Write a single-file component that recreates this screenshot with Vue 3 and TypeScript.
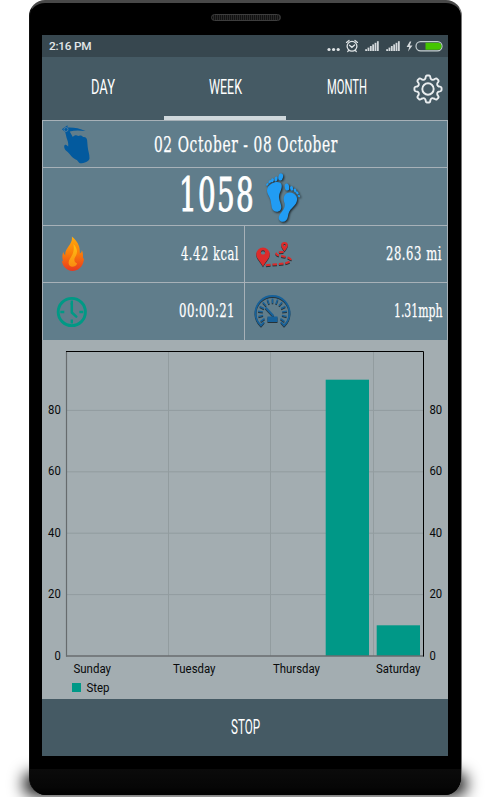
<script setup lang="ts">
import { h } from 'vue'

interface FitProps {
  text: string
  width: number
  height: number
  size: number
  spacing?: number
}

/* Text squeezed to a fixed width; its baseline sits at `height`, with room below for descenders. */
const FitText = (p: FitProps) =>
  h('svg', { class: 'fit', width: p.width + 4, height: p.height + 8 }, [
    h(
      'text',
      {
        x: 0,
        y: p.height,
        'font-size': p.size,
        'letter-spacing': p.spacing ?? 0,
        textLength: p.width,
        lengthAdjust: 'spacingAndGlyphs',
      },
      p.text,
    ),
  ])
FitText.props = ['text', 'width', 'height', 'size', 'spacing']

const tabs = [
  { label: 'DAY', width: 24, active: false },
  { label: 'WEEK', width: 33, active: true },
  { label: 'MONTH', width: 40, active: false },
]

const yOf = (v: number) => 316 - v * 3.07
const ticks = [0, 20, 40, 60, 80]
const columns = [126.5, 228.5, 331.5]
const days = [
  { label: 'Sunday', x: 31.5, width: 37.5 },
  { label: 'Tuesday', x: 131, width: 42.5 },
  { label: 'Thursday', x: 231, width: 47 },
  { label: 'Saturday', x: 334, width: 44.5 },
]
const bars = [
  { x: 283.7, value: 90 },
  { x: 334.7, value: 10 },
]
const signal = [0, 1, 2, 3, 4, 5]
const dial = Array.from({ length: 13 }, (_, i) => -125 + (i * 250) / 12)
const teeth = [0, 45, 90, 135, 180, 225, 270, 315]
const gear = teeth
  .map((a, i) => {
    const pt = (r: number, d: number) => {
      const t = ((a + d) * Math.PI) / 180
      return `${(15 + r * Math.sin(t)).toFixed(2)} ${(15 - r * Math.cos(t)).toFixed(2)}`
    }
    return `${i ? 'L' : 'M'}${pt(10.4, -17)} Q${pt(11, -12)} ${pt(12.2, -11)} Q${pt(13.6, -9)} ${pt(13.6, -5)} L${pt(13.6, 5)} Q${pt(13.6, 9)} ${pt(12.2, 11)} Q${pt(11, 12)} ${pt(10.4, 17)} Q${pt(9.8, 22.5)} ${pt(10.4, 28)}`
  })
  .join(' ') + 'Z'
</script>

<template>
  <main class="page">
    <div class="ground"><div class="shade"></div></div>
    <section class="phone">
      <div class="top">
        <div class="speaker"></div>
      </div>
      <div class="screen">
        <header class="status">
          <span class="time">2:16 PM</span>
          <svg width="118" height="22">
            <g fill="#e0e4e6">
              <circle cx="4" cy="14.5" r="1.6" /><circle cx="8.6" cy="14.5" r="1.6" /><circle cx="13.2" cy="14.5" r="1.6" />
            </g>
            <g fill="none" stroke="#dfe4e6" stroke-width="1.3" stroke-linecap="round">
              <circle cx="27" cy="11.3" r="4.9" />
              <path d="M24.5 10.2l2.4 2.1 2.7-2.4M21.5 7.4l2.5-2M32.5 7.4l-2.5-2M23.5 15.6l-.8 1M30.5 15.6l.8 1" />
            </g>
            <g fill="#d5dadd">
              <rect v-for="i in signal" :key="'a' + i" :x="40.2 + i * 2.35" :y="14.2 - i * 1.6" width="1.8" :height="1.8 + i * 1.6" />
              <rect v-for="i in signal" :key="'b' + i" :x="61.2 + i * 2.35" :y="14.2 - i * 1.6" width="1.8" :height="1.8 + i * 1.6" />
              <path d="M84.8 6.4L81.6 12h2.6l-1.2 4.6 4.5-6h-2.8l1.6-4.2z" />
            </g>
            <rect x="91" y="6.6" width="26" height="9.2" rx="4.6" fill="#37474f" stroke="#c6cfd2" stroke-width="1.2" />
            <path d="M100.5 7.8h12.5a3.5 3.5 0 0 1 0 7h-12.5z" fill="#45c500" />
          </svg>
        </header>

        <nav class="tabs">
          <div v-for="t in tabs" :key="t.label" class="tab" :class="{ active: t.active }">
            <FitText :text="t.label" :width="t.width" :height="15" :size="20" />
          </div>
          <div class="settings">
            <svg width="30" height="30" fill="none" stroke="#e9edef" stroke-width="1.9" stroke-linejoin="round">
              <path :d="gear" />
              <circle cx="15" cy="15" r="5.7" />
            </svg>
          </div>
        </nav>

        <section class="stats">
          <div class="row date">
            <svg class="hand" width="30" height="40" viewBox="0 0 30 40" fill="#035a9e">
              <path d="M.8 4.300L6.500.2v2.200c7-.2 12 .8 18 3.700-6-.8-11-.8-15.800.3L11.800 12c1.300-2 4-2.300 5.300-.9 1.900-1.300 4.200-.6 5 1 2.100-.4 3.600.7 4 2.900l.6 7c.3 4 1.900 6.500 1.800 11.500-.5 3-5 4.800-9.500 4.800-1.200-.3-1.700-2.300-3.200-3.300-4.500-1.500-7-6.500-10.300-9-2.300-1.700-3-5.300-1.500-6.200 1.700-.5 2 1 3.200 1.600C7.700 18 6.500 15.500 5.500 12.500L4.200 7z" />
              <circle cx="5" cy="4.500" r="2" fill="none" stroke="#6787a0" stroke-width=".7" />
            </svg>
            <FitText text="02 October - 08 October" :width="184" :height="17" :size="21.8" :spacing="0.9" />
          </div>

          <div class="row steps">
            <FitText text="1058" :width="76" :height="34" :size="46" :spacing="2" />
            <svg class="feet" width="38" height="52" fill="#219cf3">
              <g>
                <path d="M3.500 16c3-6 12-8 14-3.500 1.400 4-3 8.500-2.500 13.500.4 4.200 4.100 9 1.300 12.300-2.700 2.800-7.300 1.400-8.400-2.300C6.900 31.500 7.200 28 5 24.300 3.500 21.800 2.300 19 3.500 16z" />
                <ellipse cx="16.7" cy="5" rx="2.3" ry="3.6" transform="rotate(12 17 5)" />
                <ellipse cx="12" cy="7" rx="1.5" ry="2.5" transform="rotate(15 12 7)" />
                <ellipse cx="8.5" cy="8.2" rx="1.4" ry="2.1" transform="rotate(25 8 8)" />
                <ellipse cx="5.7" cy="9.8" rx="1.2" ry="1.8" transform="rotate(35 6 10)" />
                <ellipse cx="3.5" cy="12" rx="1" ry="1.5" transform="rotate(45 3 12)" />
                <path d="M20.500 23.500c2.400-4.600 9.500-3.700 12 1 1.800 4-.5 7.700-3.500 10.600-4 4-4.300 5.500-5.200 10-.8 4-4.500 6.100-7.500 3.800-3.400-2.600-.6-6.500 1.900-9.700 2.400-3.100 3.200-5.300 2-9-.8-2.500-.8-4.400.3-6.700z" />
                <ellipse cx="22.8" cy="15" rx="2.2" ry="3.6" transform="rotate(-10 23 14)" />
                <ellipse cx="27.5" cy="16.6" rx="1.5" ry="2.4" transform="rotate(-15 27 16)" />
                <ellipse cx="30.8" cy="18.5" rx="1.3" ry="2" transform="rotate(-25 31 18)" />
                <ellipse cx="33.3" cy="21" rx="1.2" ry="1.7" transform="rotate(-35 33 21)" />
                <ellipse cx="35" cy="24" rx="1" ry="1.3" transform="rotate(-35 35 24)" />
              </g>
            </svg>
          </div>

          <div class="pair">
            <div class="cell">
              <svg class="icon" width="36" height="40">
                <defs>
                  <linearGradient id="fire" x1="0" y1="0" x2="0" y2="1">
                    <stop offset="0" stop-color="#ffad0c" /><stop offset=".5" stop-color="#fa7b09" /><stop offset="1" stop-color="#e9391f" />
                  </linearGradient>
                  <linearGradient id="flame" x1="0" y1="0" x2="0" y2="1">
                    <stop offset="0" stop-color="#ffc313" /><stop offset="1" stop-color="#f98b10" />
                  </linearGradient>
                </defs>
                <path d="M15.800 2.500c5.500 4.500 8.500 9.500 8 17 1.700-.7 2-2.200 2-3.500 1.600 3.300 1.100 6.500 1.200 9l1-1.300c0 6.500-3.800 12.800-11.200 13.300C9.800 36.700 6.300 31.500 5.800 26.500l1.600 1.300C5.800 23.500 6.300 20.600 7.300 17.800c.3 1.800.9 2.700 2 3.400C8.300 14.200 17.300 10 15.800 2.500z" fill="url(#fire)" />
                <path d="M17.500 10c4.500 5 4.300 9 1.700 13-1.500 2.500-1 5.300 1.900 6.400-1.400 4.500-9.400 4.600-8.400-1.500.8-4.500 6.500-7.500 4.800-17.900z" fill="url(#flame)" />
              </svg>
              <FitText text="4.42 kcal" :width="58" :height="15" :size="19" :spacing="0.8" />
            </div>
            <div class="cell right">
              <svg class="icon shadow" width="42" height="40" fill="#dc2b2b">
                <path fill-rule="evenodd" d="M11 32.500C8 27 4.300 24.500 4.300 20.300a6.700 6.700 0 0 1 13.400 0c0 4.200-3.700 6.700-6.700 12.200zM11 16.200a2.200 2.200 0 1 0 0 4.400 2.200 2.200 0 0 0 0-4.400z" />
                <path fill-rule="evenodd" d="M32.500 17.500c-1.600-2.600-3.300-4.300-3.300-6.300a3.300 3.300 0 0 1 6.600 0c0 2-1.700 3.700-3.300 6.300zM32.500 10a1.100 1.100 0 1 0 0 2.200 1.100 1.100 0 0 0 0-2.200z" />
                <path d="M31.500 18c-8-.2-9.500 2.500-3.500 3.700 7.500 1.200 13.500 3.200 9.500 6-4.500 2.800-15 2-24.500 3.800" fill="none" stroke="#dc2b2b" stroke-width="2" stroke-dasharray="4.500 2" />
              </svg>
              <FitText text="28.63 mi" :width="56" :height="15" :size="19" :spacing="0.8" />
            </div>
          </div>

          <div class="pair last">
            <div class="cell clock">
              <svg class="icon" width="32" height="40" fill="none" stroke="#009985">
                <circle cx="15.8" cy="21" r="13.6" stroke-width="2.9" />
                <path d="M15.800 9.500v4M15.800 28.500v4M4.300 21h4M23.300 21h4" stroke-width="2.4" />
                <path d="M15.800 12.500v9l4.500 4.200" stroke-width="2.5" stroke-linecap="round" stroke-linejoin="round" />
              </svg>
              <FitText text="00:00:21" :width="56" :height="15" :size="19" :spacing="0.6" />
            </div>
            <div class="cell right">
              <svg class="icon shadow" width="42" height="40" fill="none" stroke="#176199">
                <path d="M12 31L9 34.500A17 17 0 1 1 32 34.500l-3-3.500" stroke-width="1.9" />
                <path
                  v-for="a in dial"
                  :key="a"
                  :transform="`rotate(${a} 20.5 22)`"
                  d="M20.500 7.500v4.800"
                  stroke-width="1.5"
                />
                <path d="M13.500 16.500l8 8.500" stroke-width="2" />
                <rect x="15.5" y="25.500" width="10" height="5.500" fill="#176199" stroke="none" />
              </svg>
              <FitText text="1.31mph" :width="48.5" :height="15" :size="19" />
            </div>
          </div>
        </section>

        <section class="chart">
          <svg width="406" height="359">
            <g stroke="#929c9f" stroke-width="1">
              <line v-for="t in ticks.slice(1)" :key="t" x1="25" x2="381" :y1="yOf(t)" :y2="yOf(t)" />
              <line v-for="c in columns" :key="c" y1="12" y2="316" :x1="c" :x2="c" />
            </g>
            <rect v-for="b in bars" :key="b.x" :x="b.x" :y="yOf(b.value)" width="43.3" :height="b.value * 3.07" fill="#009887" />
            <path d="M24.500 11v305.500" stroke="#666b6d" stroke-width="1.2" />
            <path d="M24 316h358" stroke="#686d6f" stroke-width="1.3" />
            <path d="M24 11.500h357.500v305" fill="none" stroke="#000" />
            <g class="label">
              <text v-for="t in ticks" :key="'l' + t" x="18.8" :y="yOf(t) + 3.5" text-anchor="end" :textLength="t ? 12.7 : 6.3" lengthAdjust="spacingAndGlyphs">{{ t }}</text>
              <text v-for="t in ticks" :key="'r' + t" x="387.5" :y="yOf(t) + 3.5" :textLength="t ? 12.7 : 6.3" lengthAdjust="spacingAndGlyphs">{{ t }}</text>
              <text v-for="d in days" :key="d.label" :x="d.x" y="333" :textLength="d.width" lengthAdjust="spacingAndGlyphs">{{ d.label }}</text>
              <text x="44.5" y="352.3" textLength="23" lengthAdjust="spacingAndGlyphs">Step</text>
            </g>
            <rect x="30" y="343" width="9" height="9" fill="#009887" />
          </svg>
        </section>

        <button class="stop">
          <FitText text="STOP" :width="29" :height="15" :size="20" />
        </button>
      </div>
      <div class="chin"></div>
    </section>
  </main>
</template>

<style>
body {
  margin: 0;
  background: #fff;
}
</style>

<style scoped>
.page {
  position: relative;
  box-sizing: border-box;
  width: 490px;
  height: 800px;
  padding-left: 29px;
  overflow: hidden;
  background: #fff;
  font-family: Roboto, sans-serif;
}
.fit {
  display: block;
  flex: none;
  margin-right: -4px;
  overflow: visible;
  fill: #fff;
}
.ground {
  position: absolute;
  left: 0;
  top: 745px;
  width: 490px;
  height: 52px;
  overflow: hidden;
}
.shade {
  margin: 28px 24px 0;
  height: 22px;
  border-radius: 8px;
  background: #000;
  filter: blur(8px);
}
.phone {
  position: relative;
  box-sizing: border-box;
  display: flex;
  flex-direction: column;
  width: 433px;
  height: 795px;
  border: 1px solid #111;
  border-right-color: #777;
  border-top: 3px solid #484848;
  border-bottom: 0;
  border-radius: 16px 16px 17px 17px;
  padding: 0 12px;
  background: #000;
  overflow: hidden;
}
.top {
  display: flex;
  justify-content: center;
  height: 32px;
  padding-top: 11px;
  box-sizing: border-box;
  flex: none;
}
.speaker {
  box-sizing: border-box;
  width: 70px;
  height: 7px;
  border: 1px solid #3d3d3d;
  border-radius: 4px;
  background: repeating-linear-gradient(90deg, #111 0 1px, #292929 1px 2px);
}
.screen {
  display: flex;
  flex-direction: column;
  width: 406px;
  height: 721px;
  flex: none;
}
.chin {
  flex: 1;
  margin: 13px -12px 0;
  background: linear-gradient(#0b0b0b, #060606 70%, #000);
}
.status {
  display: flex;
  justify-content: space-between;
  align-items: center;
  box-sizing: border-box;
  height: 22px;
  padding: 0 5px 0 7px;
  background: #37474f;
}
.time {
  color: #e3e7e9;
  font-size: 11.8px;
  font-weight: 500;
  letter-spacing: -0.25px;
}
.tabs {
  display: flex;
  height: 63px;
  background: #455a64;
}
.tab {
  box-sizing: border-box;
  display: flex;
  justify-content: center;
  width: 122px;
  padding-top: 22px;
  border-bottom: 4px solid transparent;
}
.tab.active {
  border-color: #cfd8dc;
}
.settings {
  padding: 17px 0 0 5px;
}
.stats {
  box-sizing: border-box;
  display: grid;
  grid-template-rows: 46px 57px 56px 57px;
  row-gap: 1px;
  height: 220px;
  padding: 1px 1px 0;
  background: #a7b1b8;
  font-family: 'DejaVu Serif Condensed', 'DejaVu Serif', serif;
  font-stretch: condensed;
}
.stats .fit {
  stroke: #fff;
  stroke-width: 0.25px;
}
.row,
.cell {
  display: flex;
  background: #607d8b;
}
.date {
  padding: 0 0 0 18px;
}
.hand {
  margin: 4px 63px 0 0;
}
.date .fit {
  margin-top: 14px;
}
.steps {
  padding-left: 136px;
}
.steps .fit {
  margin-top: 9px;
  stroke-width: 1px;
}
.feet {
  margin: 4px 0 0 9px;
  filter: drop-shadow(1px 1.5px 0.8px rgba(0, 0, 0, 0.75));
}
.pair {
  display: grid;
  grid-template-columns: 201px 202px;
  column-gap: 1px;
}
.cell {
  justify-content: space-between;
  padding: 8px 10px 0 13px;
}
.pair .fit {
  margin-top: 11px;
  margin-right: -9px;
}
.cell.right {
  padding-left: 7px;
}
.last .cell {
  padding-top: 8px;
}
.cell.clock {
  padding-right: 14px;
}
.shadow {
  filter: drop-shadow(0.7px 1px 0.5px rgba(0, 0, 0, 0.6));
}
.chart {
  height: 359px;
  background: #a3adb1;
}
.chart svg {
  display: block;
}
.label {
  fill: #080a0b;
  font-size: 12px;
}
.stop {
  display: flex;
  justify-content: center;
  height: 57px;
  padding: 20px 0 0;
  border: 0;
  background: #455a64;
  font-family: Roboto, sans-serif;
}
</style>
